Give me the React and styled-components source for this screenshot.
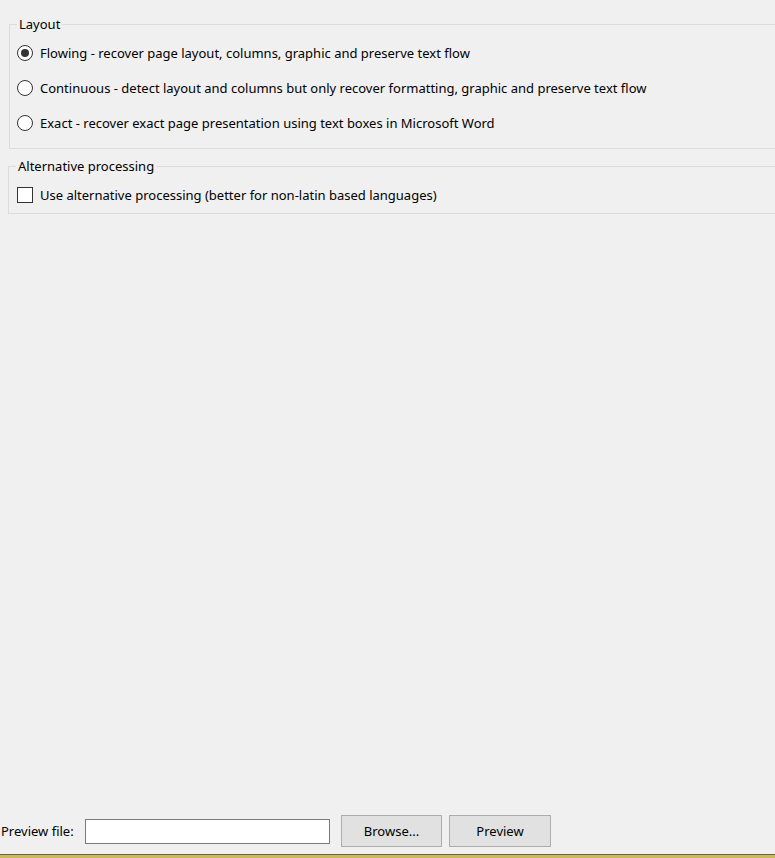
import React from "react";
import styled, { createGlobalStyle } from "styled-components";

const Global = createGlobalStyle`
  html, body { margin: 0; padding: 0; background: #f0f0f0; overflow: hidden; }
  body { font-family: "Noto Sans", "Open Sans", sans-serif; font-size: 13px; color: #000; }
  #root { height: 858px; }
`;

const Page = styled.div`
  height: 858px;
  display: flex;
  flex-direction: column;
  background: #f0f0f0;
`;

const Group = styled.fieldset`
  margin: ${(p) => p.$top}px -20px 0 ${(p) => p.$left}px;
  padding: ${(p) => p.$pad};
  border: 1px solid #dcdcdc;
  min-width: 0;
`;

const Legend = styled.legend`
  margin-left: ${(p) => p.$indent}px;
  padding: 0 2px;
  line-height: 16px;
  font-size: 13px;
`;

const Row = styled.label`
  display: flex;
  align-items: center;
  gap: 7px;
  height: ${(p) => p.$h}px;
  white-space: nowrap;
`;

const RadioMark = styled.span`
  width: 14px;
  height: 14px;
  border: 1px solid #333;
  border-radius: 50%;
  background: #fff;
  display: flex;
  align-items: center;
  justify-content: center;
  flex: none;
  &::after {
    content: "";
    width: 8px;
    height: 8px;
    border-radius: 50%;
    background: #333;
    display: ${(p) => (p.$on ? "block" : "none")};
  }
`;

const CheckMark = styled.span`
  width: 14px;
  height: 14px;
  border: 1px solid #333;
  background: #fff;
  flex: none;
`;

const Spacer = styled.div`
  flex: 1;
`;

const BottomBar = styled.div`
  display: flex;
  align-items: center;
  height: 32px;
  padding-bottom: 7px;
`;

const Label = styled.span`
  width: 85px;
  padding-left: 1px;
  box-sizing: border-box;
`;

const Input = styled.input`
  width: 245px;
  height: 25px;
  box-sizing: border-box;
  border: 1px solid #7a7a7a;
  background: #fff;
  margin: 0 11px 0 0;
  padding: 0 3px;
  outline: none;
`;

const Button = styled.button`
  width: ${(p) => p.$w}px;
  height: 32px;
  box-sizing: border-box;
  border: 1px solid #adadad;
  background: #e1e1e1;
  font-family: inherit;
  font-size: 13px;
  color: #000;
  margin-right: 7px;
  padding: 0;
`;

const Strip = styled.div`
  height: 3px;
  border-top: 1px solid #6b6546;
  background: #cdb85d;
`;

export default function App() {
  return (
    <Page>
      <Global />
      <Group $top={16} $left={9} $pad="3px 0 8px 7px">
        <Legend $indent={0}>Layout</Legend>
        <Row $h={35}>
          <RadioMark $on />
          Flowing - recover page layout, columns, graphic and preserve text flow
        </Row>
        <Row $h={35}>
          <RadioMark />
          Continuous - detect layout and columns but only recover formatting, graphic and preserve text flow
        </Row>
        <Row $h={35}>
          <RadioMark />
          Exact - recover exact page presentation using text boxes in Microsoft Word
        </Row>
      </Group>
      <Group $top={9} $left={8} $pad="9px 0 6px 8px">
        <Legend $indent={-1}>Alternative processing</Legend>
        <Row $h={24}>
          <CheckMark />
          Use alternative processing (better for non-latin based languages)
        </Row>
      </Group>
      <Spacer />
      <BottomBar>
        <Label>Preview file:</Label>
        <Input type="text" />
        <Button $w={101}>Browse...</Button>
        <Button $w={102}>Preview</Button>
      </BottomBar>
      <Strip />
    </Page>
  );
}
